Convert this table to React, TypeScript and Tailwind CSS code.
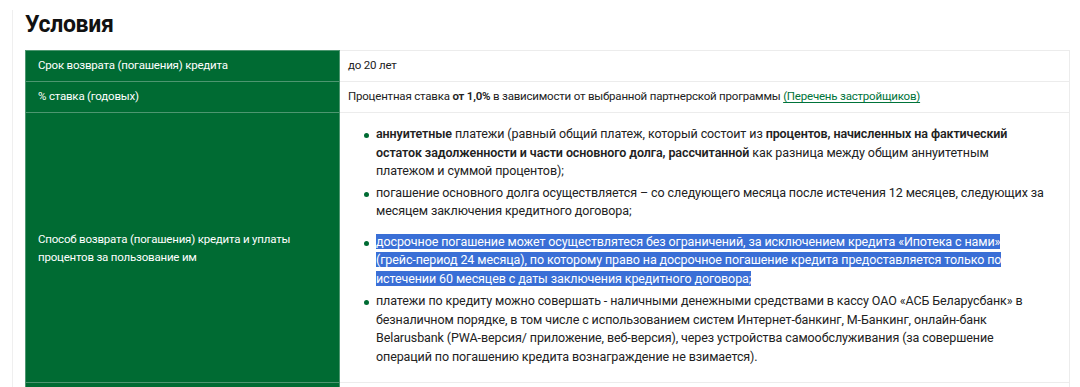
import React from "react";

const rows = [
  { label: "Срок возврата (погашения) кредита", value: <span>до 20 лет</span> },
  {
    label: "% ставка (годовых)",
    value: (
      <span>
        Процентная ставка <b className="font-semibold">от 1,0%</b> в зависимости от выбранной партнерской программы{" "}
        <a className="text-[#00733a] underline underline-offset-2">(Перечень застройщиков)</a>
      </span>
    ),
  },
];

const Bullet = ({ children, className }: { children: React.ReactNode; className?: string }) => (
  <li className={`relative whitespace-nowrap ${className ?? ""}`}>
    <span className="absolute -left-[12px] top-[8px] h-[5px] w-[5px] rounded-full bg-[#006b33]" />
    {children}
  </li>
);

export default function App() {
  return (
    <div className="h-[387px] overflow-hidden bg-white pl-3 text-[#222]" style={{ fontFamily: "Roboto, sans-serif" }}>
      <div className="mt-[10px] h-[400px] border-l border-[#efefef] pl-3 pr-[10px]">
        <h2 className="text-[23px] font-bold leading-[30px] tracking-[-0.3px] text-[#111]">Условия</h2>
        <table className="mt-[10px] w-full table-fixed border-collapse text-[11.5px] tracking-[-0.2px]">
          <colgroup>
            <col className="w-[314px]" />
            <col />
          </colgroup>
          <tbody>
            {rows.map((r, i) => (
              <tr key={i}>
                <td className="h-[31px] border border-[#4d9670] bg-[#006b33] px-3 align-middle text-white">
                  {r.label}
                </td>
                <td className="border border-[#ececec] px-2 align-middle">{r.value}</td>
              </tr>
            ))}
            <tr>
              <td className="h-[270px] border border-[#4d9670] bg-[#006b33] px-3 align-middle leading-[18px] text-white">
                Способ возврата (погашения) кредита и уплаты
                <br />
                процентов за пользование им
              </td>
              <td className="border border-[#ececec] px-2 align-top text-[12.5px] leading-[18.5px] tracking-[-0.1px]">
                <ul className="mt-[12px] pl-[28px]">
                  <Bullet>
                    <b className="font-semibold">аннуитетные</b> платежи (равный общий платеж, который состоит из{" "}
                    <b className="font-semibold">процентов, начисленных на фактический</b>
                    <br />
                    <b className="font-semibold">остаток задолженности и части основного долга, рассчитанной</b> как разница между общим аннуитетным
                    <br />
                    платежом и суммой процентов);
                  </Bullet>
                  <Bullet className="mt-[3px]">
                    погашение основного долга осуществляется – со следующего месяца после истечения 12 месяцев, следующих за
                    <br />
                    месяцем заключения кредитного договора;
                  </Bullet>
                  <Bullet className="mt-[12px]">
                    <span className="bg-[#3a6fd6] text-white">
                      досрочное погашение может осуществлятеся без ограничений, за исключением кредита «Ипотека с нами»
                      <br />
                      (грейс-период 24 месяца), по которому право на досрочное погашение кредита предоставляется только по
                      <br />
                      истечении 60 месяцев с даты заключения кредитного договора;
                    </span>
                  </Bullet>
                  <Bullet className="mt-[4px]">
                    платежи по кредиту можно совершать - наличными денежными средствами в кассу ОАО «АСБ Беларусбанк» в
                    <br />
                    безналичном порядке, в том числе с использованием систем Интернет-банкинг, М-Банкинг, онлайн-банк
                    <br />
                    Belarusbank (PWA-версия/ приложение, веб-версия), через устройства самообслуживания (за совершение
                    <br />
                    операций по погашению кредита вознаграждение не взимается).
                  </Bullet>
                </ul>
              </td>
            </tr>
            <tr>
              <td className="h-[30px] border border-[#4d9670] bg-[#006b33]" />
              <td className="border border-[#ececec]" />
            </tr>
          </tbody>
        </table>
      </div>
    </div>
  );
}
